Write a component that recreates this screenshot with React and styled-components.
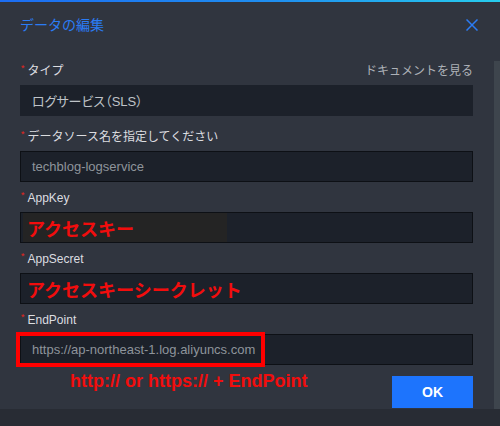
import styled, { createGlobalStyle } from 'styled-components';

const GlobalStyle = createGlobalStyle`
  html, body {
    margin: 0;
    padding: 0;
    background: #30353f;
  }
  * {
    box-sizing: border-box;
  }
`;

const Dialog = styled.div`
  width: 500px;
  height: 426px;
  display: flex;
  flex-direction: column;
  background: #30353f;
  font-family: 'Liberation Sans', 'Noto Sans CJK JP', sans-serif;
  overflow: hidden;
`;

const TopBar = styled.div`
  height: 2px;
  flex: none;
  background: linear-gradient(90deg, #1c6df2 0%, #1f8ff0 55%, #27cdee 100%);
`;

const Header = styled.div`
  height: 59px;
  flex: none;
  display: flex;
  justify-content: space-between;
  align-items: flex-start;
  padding: 13px 22px 0 20px;
`;

const Title = styled.h2`
  margin: 0;
  font-size: 14px;
  line-height: 20px;
  font-weight: normal;
  color: #2b7cf4;
`;

const CloseButton = styled.button`
  border: 0;
  padding: 0;
  margin-top: 4px;
  background: none;
  width: 12px;
  height: 12px;
  display: flex;
  cursor: pointer;
`;

const Body = styled.div`
  height: 348px;
  flex: none;
  display: flex;
`;

const Content = styled.div`
  flex: 1;
  padding: 0 21px 0 20px;
  overflow: hidden;
`;

const ScrollTrack = styled.div`
  width: 6px;
  flex: none;
  background: #3e454d;
`;

const Footer = styled.div`
  flex: 1;
  background: #282c34;
`;

const Field = styled.div`
  margin-bottom: ${(p) => (p.$first ? '11px' : '6px')};
`;

const LabelRow = styled.div`
  display: flex;
  justify-content: space-between;
  align-items: center;
  height: 20px;
  line-height: 20px;
`;

const Label = styled.label`
  font-size: 12px;
  color: #dcdde0;
  display: flex;
  align-items: center;
`;

const Required = styled.span`
  color: #e8261e;
  font-size: 9px;
  line-height: 9px;
  margin: -5px 3px 0 1px;
`;

const DocLink = styled.a`
  font-size: 12px;
  color: #adb1b7;
  text-decoration: none;
`;

const InputWrap = styled.div`
  position: relative;
  margin-top: 4px;
`;

const Input = styled.div`
  height: 31px;
  display: flex;
  align-items: center;
  padding: 0 11px;
  background: #1c212a;
  border: 1px solid ${(p) => (p.$disabled ? '#1c212a' : '#0d1015')};
  color: ${(p) => (p.$disabled ? '#bfc3c8' : '#8e949b')};
  font-size: 13px;
  white-space: nowrap;
  font-feature-settings: ${(p) => (p.$disabled ? '"palt"' : 'normal')};
`;

const Secret = styled.div`
  position: absolute;
  left: 3px;
  top: 1px;
  bottom: 1px;
  width: ${(p) => p.$width}px;
  display: flex;
  align-items: center;
  padding-left: 4px;
  background: ${(p) => (p.$masked ? '#242424' : 'transparent')};
  color: #f20d0d;
  font-size: 18px;
  font-weight: bold;
  font-family: 'Noto Sans CJK JP', sans-serif;
  white-space: nowrap;
`;

const Highlight = styled.div`
  position: absolute;
  left: -4px;
  top: -2px;
  width: 249px;
  height: 35px;
  border: 4px solid #ff0000;
  pointer-events: none;
`;

const ActionRow = styled.div`
  display: flex;
  justify-content: space-between;
  align-items: flex-start;
`;

const Hint = styled.span`
  padding-left: 50px;
  font-size: 18px;
  line-height: 20px;
  font-weight: bold;
  color: #f20d0d;
  font-family: 'Liberation Sans', Arial, sans-serif;
`;

const OkButton = styled.button`
  margin-top: 5px;
  width: 81px;
  height: 32px;
  border: 0;
  background: #1d74fd;
  color: #ffffff;
  font-size: 14px;
  font-weight: bold;
  font-family: 'Liberation Sans', Arial, sans-serif;
  cursor: pointer;
`;

function CloseIcon() {
  return (
    <svg width="12" height="12" viewBox="0 0 12 12">
      <path d="M0.5 0.5 L11.5 11.5 M11.5 0.5 L0.5 11.5" stroke="#2b7cf4" strokeWidth="1.5" fill="none" />
    </svg>
  );
}

function FieldLabel({ children }) {
  return (
    <Label>
      <Required>*</Required>
      {children}
    </Label>
  );
}

export default function App() {
  return (
    <>
      <GlobalStyle />
      <Dialog>
        <TopBar />
        <Header>
          <Title>データの編集</Title>
          <CloseButton aria-label="close">
            <CloseIcon />
          </CloseButton>
        </Header>
        <Body>
          <Content>
            <Field $first>
              <LabelRow>
                <FieldLabel>タイプ</FieldLabel>
                <DocLink href="#">ドキュメントを見る</DocLink>
              </LabelRow>
              <InputWrap>
                <Input $disabled>ログサービス（SLS）</Input>
              </InputWrap>
            </Field>

            <Field>
              <LabelRow>
                <FieldLabel>データソース名を指定してください</FieldLabel>
              </LabelRow>
              <InputWrap>
                <Input>techblog-logservice</Input>
              </InputWrap>
            </Field>

            <Field>
              <LabelRow>
                <FieldLabel>AppKey</FieldLabel>
              </LabelRow>
              <InputWrap>
                <Input />
                <Secret $masked $width={204}>アクセスキー</Secret>
              </InputWrap>
            </Field>

            <Field>
              <LabelRow>
                <FieldLabel>AppSecret</FieldLabel>
              </LabelRow>
              <InputWrap>
                <Input />
                <Secret $width={240}>アクセスキーシークレット</Secret>
              </InputWrap>
            </Field>

            <Field>
              <LabelRow>
                <FieldLabel>EndPoint</FieldLabel>
              </LabelRow>
              <InputWrap>
                <Input>https://ap-northeast-1.log.aliyuncs.com</Input>
                <Highlight />
              </InputWrap>
            </Field>

            <ActionRow>
              <Hint>http:// or https:// + EndPoint</Hint>
              <OkButton>OK</OkButton>
            </ActionRow>
          </Content>
          <ScrollTrack />
        </Body>
        <Footer />
      </Dialog>
    </>
  );
}
